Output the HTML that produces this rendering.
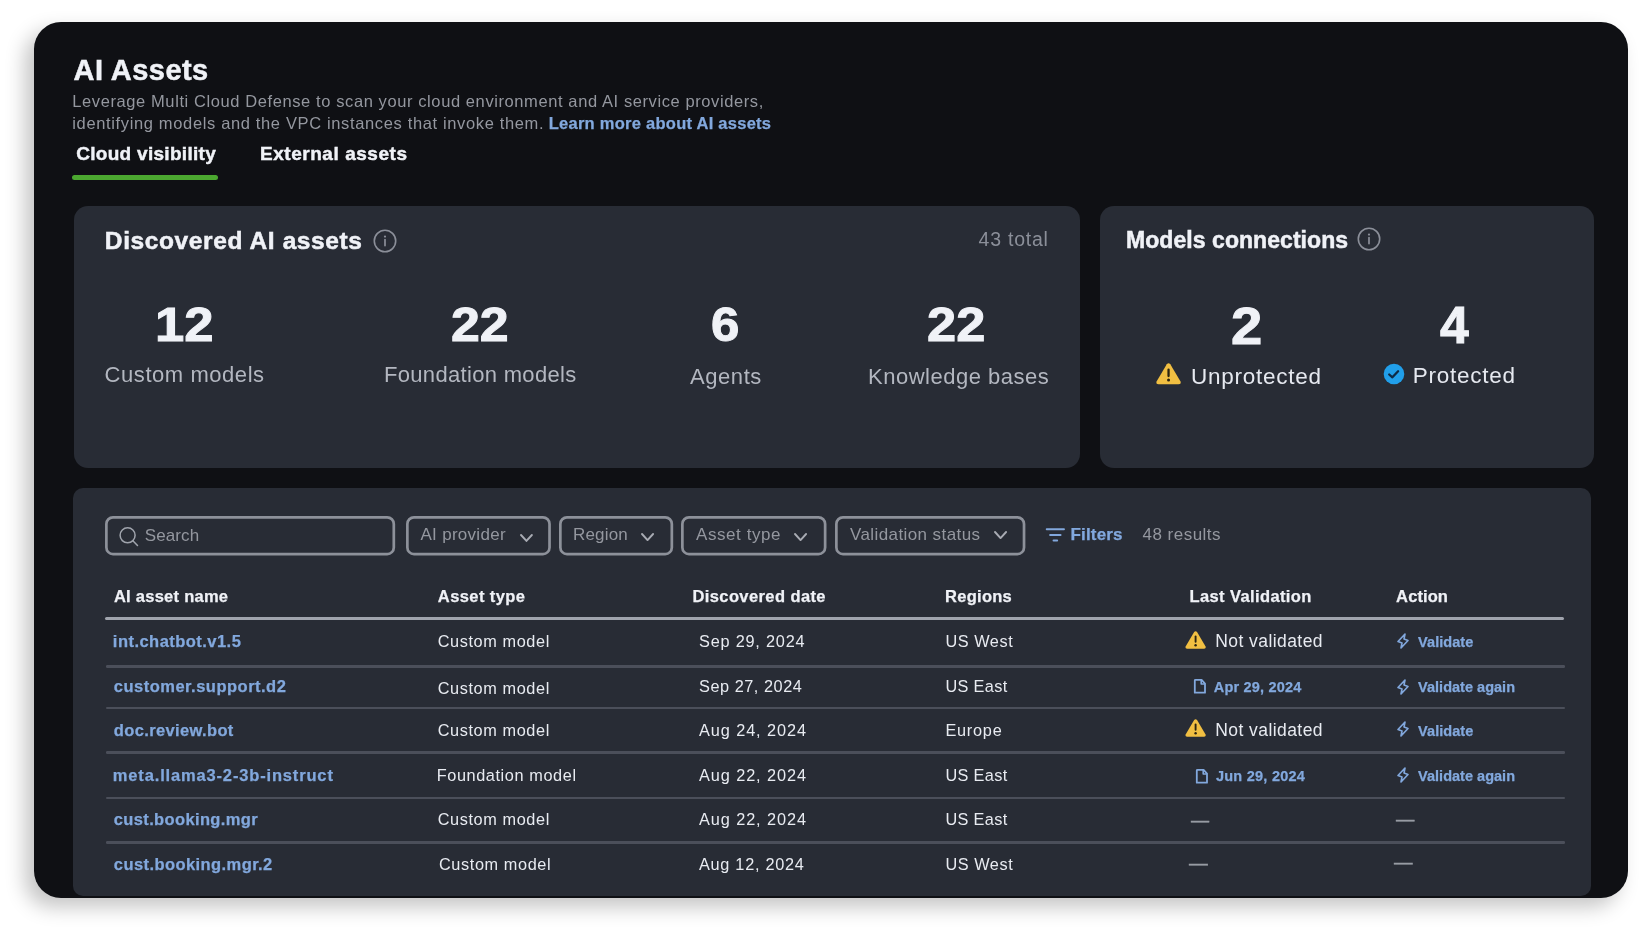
<!DOCTYPE html>
<html lang="en">
<head>
<meta charset="utf-8">
<title>AI Assets</title>
<style>
html,body{margin:0;padding:0;background:#fff;}
body{width:1650px;height:934px;overflow:hidden;position:relative;font-family:"Liberation Sans", sans-serif;}
.card{will-change:transform;position:absolute;left:34px;top:22px;width:1594px;height:876px;background:#0f1014;border-radius:27px;box-shadow:-9px 9px 20px rgba(0,0,0,0.23);}
.panel{position:absolute;background:#282c35;}
.t{position:absolute;margin:0;padding:0;line-height:1;white-space:nowrap;font-weight:400;font-family:"Liberation Sans", sans-serif;}
.abs{position:absolute;}
.ico{position:absolute;overflow:visible;}
a.t{text-decoration:none;}
</style>
</head>
<body>
<main class="card">
<h1 class="t" style="left:39.55px;top:34.00px;font-size:29px;letter-spacing:0.445px;color:#f0f2f7;font-weight:700;-webkit-text-stroke:0.5px #f0f2f7;">AI Assets</h1>
<span class="t" style="left:38.30px;top:71.00px;font-size:16.5px;letter-spacing:0.594px;color:#94979f;">Leverage Multi Cloud Defense to scan your cloud environment and AI service providers,</span>
<span class="t" style="left:38.30px;top:93.00px;font-size:16.5px;letter-spacing:0.641px;color:#94979f;">identifying models and the VPC instances that invoke them.</span>
<span class="t" style="left:514.73px;top:93.00px;font-size:16.5px;letter-spacing:0.261px;color:#82a8dd;font-weight:700;-webkit-text-stroke:0.25px #82a8dd;">Learn more about AI assets</span>
<span class="t" style="left:42.22px;top:122.00px;font-size:19px;letter-spacing:0.293px;color:#f0f2f7;font-weight:700;-webkit-text-stroke:0.45px #f0f2f7;">Cloud visibility</span>
<span class="t" style="left:225.93px;top:122.00px;font-size:19px;letter-spacing:0.550px;color:#f0f2f7;font-weight:700;-webkit-text-stroke:0.45px #f0f2f7;">External assets</span>
<div class="abs tabline" style="left:38.00px;top:153.00px;width:146.00px;height:5.00px;background:#4ba730;border-radius:3px;"></div>
<section class="panel" style="left:40px;top:184px;width:1006px;height:262px;border-radius:14px;">
<span class="t" style="left:30.85px;top:23.00px;font-size:24.5px;letter-spacing:0.607px;color:#f0f2f7;font-weight:700;-webkit-text-stroke:0.5px #f0f2f7;">Discovered AI assets</span>
<span class="t" style="left:904.60px;top:24.00px;font-size:19.5px;letter-spacing:0.767px;color:#8b8f99;">43 total</span>
<span class="t" style="left:81.48px;top:94.00px;font-size:49px;color:#f0f2f7;transform:scaleX(1.0746);transform-origin:0 0;font-weight:700;-webkit-text-stroke:1.0px #f0f2f7;">12</span>
<span class="t" style="left:30.60px;top:158.00px;font-size:22px;letter-spacing:0.556px;color:#b3b7c0;">Custom models</span>
<span class="t" style="left:377.04px;top:94.00px;font-size:49px;color:#f0f2f7;transform:scaleX(1.0583);transform-origin:0 0;font-weight:700;-webkit-text-stroke:1.0px #f0f2f7;">22</span>
<span class="t" style="left:310.00px;top:158.00px;font-size:22px;letter-spacing:0.318px;color:#b3b7c0;">Foundation models</span>
<span class="t" style="left:637.46px;top:94.00px;font-size:49px;color:#f0f2f7;transform:scaleX(1.0400);transform-origin:0 0;font-weight:700;-webkit-text-stroke:1.0px #f0f2f7;">6</span>
<span class="t" style="left:616.00px;top:160.00px;font-size:22px;letter-spacing:0.562px;color:#b3b7c0;">Agents</span>
<span class="t" style="left:853.13px;top:94.00px;font-size:49px;color:#f0f2f7;transform:scaleX(1.0698);transform-origin:0 0;font-weight:700;-webkit-text-stroke:1.0px #f0f2f7;">22</span>
<span class="t" style="left:794.00px;top:160.00px;font-size:22px;letter-spacing:0.509px;color:#b3b7c0;">Knowledge bases</span>
<svg class="ico" style="left:298.30px;top:22.20px" width="26.00" height="26.00" viewBox="0 0 26 26"><circle cx="13" cy="13" r="10.7" fill="none" stroke="#8b8f99" stroke-width="1.6"/><circle cx="13" cy="8.6" r="1.1" fill="#8b8f99"/><path d="M13 11.6V17.6" stroke="#8b8f99" stroke-width="1.7" stroke-linecap="round"/></svg>
</section>
<section class="panel" style="left:1066px;top:184px;width:494px;height:262px;border-radius:14px;">
<span class="t" style="left:26.05px;top:23.00px;font-size:23px;letter-spacing:0.053px;color:#f0f2f7;font-weight:700;-webkit-text-stroke:0.5px #f0f2f7;">Models connections</span>
<span class="t" style="left:130.82px;top:94.00px;font-size:52px;color:#f0f2f7;transform:scaleX(1.0808);transform-origin:0 0;font-weight:700;-webkit-text-stroke:1.0px #f0f2f7;">2</span>
<span class="t" style="left:340.40px;top:93.00px;font-size:52px;color:#f0f2f7;transform:scaleX(0.9931);transform-origin:0 0;font-weight:700;-webkit-text-stroke:1.0px #f0f2f7;">4</span>
<span class="t" style="left:91.00px;top:160.00px;font-size:22.5px;letter-spacing:0.754px;color:#e6e9f0;">Unprotected</span>
<span class="t" style="left:312.80px;top:159.00px;font-size:22.5px;letter-spacing:0.738px;color:#e6e9f0;">Protected</span>
<svg class="ico" style="left:256.20px;top:20.40px" width="26.00" height="26.00" viewBox="0 0 26 26"><circle cx="13" cy="13" r="10.7" fill="none" stroke="#8b8f99" stroke-width="1.6"/><circle cx="13" cy="8.6" r="1.1" fill="#8b8f99"/><path d="M13 11.6V17.6" stroke="#8b8f99" stroke-width="1.7" stroke-linecap="round"/></svg>
<svg class="ico" style="left:56.10px;top:156.60px" width="25.10" height="21.80" viewBox="0 0 24 21"><path d="M10.3 1.3 L0.6 17.6 Q-0.6 20.4 2.4 20.5 L21.6 20.5 Q24.6 20.4 23.4 17.6 L13.7 1.3 Q12 -0.9 10.3 1.3 Z" fill="#f1bf42"/><path d="M12 6.4V12.6" stroke="#2b2411" stroke-width="2.2" stroke-linecap="round"/><circle cx="12" cy="16.4" r="1.45" fill="#2b2411"/></svg>
<svg class="ico" style="left:282.30px;top:155.90px" width="24.00" height="24.00" viewBox="0 0 24 24"><circle cx="12" cy="12" r="10.3" fill="#219fea"/><path d="M7.2 12.5 L10.4 15.3 L16.1 9.3" fill="none" stroke="#0e2a45" stroke-width="2.3" stroke-linecap="round" stroke-linejoin="round"/></svg>
</section>
<section class="panel" style="left:39px;top:466px;width:1518px;height:407.5px;border-radius:10px;">
<svg class="ico field" style="left:31.50px;top:27.50px" width="290.20" height="39.40" viewBox="0 0 290.20 39.40"><rect x="1.35" y="1.35" width="287.50" height="36.70" rx="6.6" fill="none" stroke="#8d919a" stroke-width="2.7"/></svg>
<svg class="ico field" style="left:332.60px;top:27.50px" width="144.90" height="39.40" viewBox="0 0 144.90 39.40"><rect x="1.35" y="1.35" width="142.20" height="36.70" rx="6.6" fill="none" stroke="#8d919a" stroke-width="2.7"/></svg>
<svg class="ico field" style="left:485.80px;top:27.50px" width="114.20" height="39.40" viewBox="0 0 114.20 39.40"><rect x="1.35" y="1.35" width="111.50" height="36.70" rx="6.6" fill="none" stroke="#8d919a" stroke-width="2.7"/></svg>
<svg class="ico field" style="left:608.10px;top:27.50px" width="145.50" height="39.40" viewBox="0 0 145.50 39.40"><rect x="1.35" y="1.35" width="142.80" height="36.70" rx="6.6" fill="none" stroke="#8d919a" stroke-width="2.7"/></svg>
<svg class="ico field" style="left:761.80px;top:27.50px" width="190.40" height="39.40" viewBox="0 0 190.40 39.40"><rect x="1.35" y="1.35" width="187.70" height="36.70" rx="6.6" fill="none" stroke="#8d919a" stroke-width="2.7"/></svg>
<svg class="ico" style="left:44.00px;top:36.00px" width="24.00" height="24.00" viewBox="0 0 24 24"><circle cx="10.6" cy="11.3" r="7.5" fill="none" stroke="#a0a4ad" stroke-width="1.5"/><path d="M16.1 16.9 L20.5 21.5" stroke="#a0a4ad" stroke-width="1.5" stroke-linecap="round"/></svg>
<svg class="ico" style="left:447.30px;top:45.52px" width="12.90" height="8.97" viewBox="0 0 12.90 8.97"><path d="M1 1 L6.45 6.97 L11.90 1" fill="none" stroke="#a8abb3" stroke-width="1.9" stroke-linecap="round" stroke-linejoin="round"/></svg>
<svg class="ico" style="left:567.90px;top:45.46px" width="13.10" height="9.07" viewBox="0 0 13.10 9.07"><path d="M1 1 L6.55 7.07 L12.10 1" fill="none" stroke="#a8abb3" stroke-width="1.9" stroke-linecap="round" stroke-linejoin="round"/></svg>
<svg class="ico" style="left:721.20px;top:45.46px" width="13.10" height="9.07" viewBox="0 0 13.10 9.07"><path d="M1 1 L6.55 7.07 L12.10 1" fill="none" stroke="#a8abb3" stroke-width="1.9" stroke-linecap="round" stroke-linejoin="round"/></svg>
<svg class="ico" style="left:920.70px;top:43.46px" width="13.10" height="9.07" viewBox="0 0 13.10 9.07"><path d="M1 1 L6.55 7.07 L12.10 1" fill="none" stroke="#a8abb3" stroke-width="1.9" stroke-linecap="round" stroke-linejoin="round"/></svg>
<svg class="ico" style="left:972.00px;top:36.00px" width="21.00" height="21.00" viewBox="0 0 21 21"><path d="M1.7 5.3 H19 M5.1 11 H15.6 M8.5 16.5 H12.2" stroke="#82a8dd" stroke-width="1.9" stroke-linecap="round" fill="none"/></svg>
<div class="abs" style="left:31.50px;top:129.00px;width:1459.80px;height:3.30px;background:#a0a4ad;border-radius:1.6px;"></div>
<div class="abs" style="left:33.00px;top:177.25px;width:1459.30px;height:2.50px;background:#4b4f5a;border-radius:1.2px;"></div>
<div class="abs" style="left:33.00px;top:218.95px;width:1459.30px;height:2.50px;background:#4b4f5a;border-radius:1.2px;"></div>
<div class="abs" style="left:33.00px;top:263.45px;width:1459.30px;height:2.50px;background:#4b4f5a;border-radius:1.2px;"></div>
<div class="abs" style="left:33.00px;top:308.55px;width:1459.30px;height:2.50px;background:#4b4f5a;border-radius:1.2px;"></div>
<div class="abs" style="left:33.00px;top:353.05px;width:1459.30px;height:2.50px;background:#4b4f5a;border-radius:1.2px;"></div>
<svg class="ico" style="left:1112.30px;top:143.40px" width="21.20" height="18.10" viewBox="0 0 24 21"><path d="M10.3 1.3 L0.6 17.6 Q-0.6 20.4 2.4 20.5 L21.6 20.5 Q24.6 20.4 23.4 17.6 L13.7 1.3 Q12 -0.9 10.3 1.3 Z" fill="#f1bf42"/><path d="M12 6.4V12.6" stroke="#2b2411" stroke-width="2.2" stroke-linecap="round"/><circle cx="12" cy="16.4" r="1.45" fill="#2b2411"/></svg>
<svg class="ico" style="left:1112.30px;top:230.50px" width="21.20" height="18.10" viewBox="0 0 24 21"><path d="M10.3 1.3 L0.6 17.6 Q-0.6 20.4 2.4 20.5 L21.6 20.5 Q24.6 20.4 23.4 17.6 L13.7 1.3 Q12 -0.9 10.3 1.3 Z" fill="#f1bf42"/><path d="M12 6.4V12.6" stroke="#2b2411" stroke-width="2.2" stroke-linecap="round"/><circle cx="12" cy="16.4" r="1.45" fill="#2b2411"/></svg>
<svg class="ico" style="left:1120.60px;top:191.30px" width="11.80" height="14.50" viewBox="0 0 11.8 14.5"><path d="M1.6 0.8 H7.6 L11 4.6 V13.7 H0.8 V1.6 Q0.8 0.8 1.6 0.8 Z" fill="none" stroke="#82a8dd" stroke-width="1.8" stroke-linejoin="round"/><path d="M7.2 1 V5 H10.8" fill="none" stroke="#82a8dd" stroke-width="1.6" stroke-linejoin="round"/></svg>
<svg class="ico" style="left:1122.50px;top:280.90px" width="11.80" height="14.50" viewBox="0 0 11.8 14.5"><path d="M1.6 0.8 H7.6 L11 4.6 V13.7 H0.8 V1.6 Q0.8 0.8 1.6 0.8 Z" fill="none" stroke="#82a8dd" stroke-width="1.8" stroke-linejoin="round"/><path d="M7.2 1 V5 H10.8" fill="none" stroke="#82a8dd" stroke-width="1.6" stroke-linejoin="round"/></svg>
<svg class="ico" style="left:1321.70px;top:145.30px" width="16.00" height="16.00" viewBox="0 0 256 256"><path d="M96 240 L112 160 L48 136 L160 16 L144 96 L208 120 Z" fill="none" stroke="#82a8dd" stroke-width="26" stroke-linejoin="round" stroke-linecap="round"/></svg>
<svg class="ico" style="left:1321.70px;top:191.30px" width="16.00" height="16.00" viewBox="0 0 256 256"><path d="M96 240 L112 160 L48 136 L160 16 L144 96 L208 120 Z" fill="none" stroke="#82a8dd" stroke-width="26" stroke-linejoin="round" stroke-linecap="round"/></svg>
<svg class="ico" style="left:1321.70px;top:233.20px" width="16.00" height="16.00" viewBox="0 0 256 256"><path d="M96 240 L112 160 L48 136 L160 16 L144 96 L208 120 Z" fill="none" stroke="#82a8dd" stroke-width="26" stroke-linejoin="round" stroke-linecap="round"/></svg>
<svg class="ico" style="left:1321.70px;top:279.30px" width="16.00" height="16.00" viewBox="0 0 256 256"><path d="M96 240 L112 160 L48 136 L160 16 L144 96 L208 120 Z" fill="none" stroke="#82a8dd" stroke-width="26" stroke-linejoin="round" stroke-linecap="round"/></svg>
<span class="t" style="left:71.80px;top:39.00px;font-size:17px;letter-spacing:0.098px;color:#94979f;">Search</span>
<span class="t" style="left:347.50px;top:38.00px;font-size:17px;letter-spacing:0.286px;color:#94979f;">AI provider</span>
<span class="t" style="left:500.00px;top:38.00px;font-size:17px;letter-spacing:0.177px;color:#94979f;">Region</span>
<span class="t" style="left:623.00px;top:38.00px;font-size:17px;letter-spacing:0.565px;color:#94979f;">Asset type</span>
<span class="t" style="left:777.00px;top:38.00px;font-size:17px;letter-spacing:0.407px;color:#94979f;">Validation status</span>
<span class="t" style="left:997.53px;top:38.00px;font-size:17px;letter-spacing:0.165px;color:#82a8dd;font-weight:700;-webkit-text-stroke:0.25px #82a8dd;">Filters</span>
<span class="t" style="left:1069.60px;top:38.00px;font-size:17px;letter-spacing:0.466px;color:#94979f;">48 results</span>
<span class="t" style="left:40.92px;top:100.00px;font-size:16.5px;letter-spacing:0.263px;color:#f0f2f7;font-weight:700;-webkit-text-stroke:0.25px #f0f2f7;">AI asset name</span>
<span class="t" style="left:364.82px;top:100.00px;font-size:16.5px;letter-spacing:0.420px;color:#f0f2f7;font-weight:700;-webkit-text-stroke:0.25px #f0f2f7;">Asset type</span>
<span class="t" style="left:619.42px;top:100.00px;font-size:16.5px;letter-spacing:0.404px;color:#f0f2f7;font-weight:700;-webkit-text-stroke:0.25px #f0f2f7;">Discovered date</span>
<span class="t" style="left:872.12px;top:100.00px;font-size:16.5px;letter-spacing:0.256px;color:#f0f2f7;font-weight:700;-webkit-text-stroke:0.25px #f0f2f7;">Regions</span>
<span class="t" style="left:1116.53px;top:100.00px;font-size:16.5px;letter-spacing:0.385px;color:#f0f2f7;font-weight:700;-webkit-text-stroke:0.25px #f0f2f7;">Last Validation</span>
<span class="t" style="left:1323.12px;top:100.00px;font-size:16.5px;letter-spacing:0.100px;color:#f0f2f7;font-weight:700;-webkit-text-stroke:0.25px #f0f2f7;">Action</span>
<span class="t" style="left:39.83px;top:145.00px;font-size:16.5px;letter-spacing:0.467px;color:#82a8dd;font-weight:700;-webkit-text-stroke:0.25px #82a8dd;">int.chatbot.v1.5</span>
<span class="t" style="left:364.70px;top:145.00px;font-size:16.3px;letter-spacing:0.605px;color:#e8ebf1;">Custom model</span>
<span class="t" style="left:626.00px;top:145.00px;font-size:16.3px;letter-spacing:0.790px;color:#e8ebf1;">Sep 29, 2024</span>
<span class="t" style="left:872.40px;top:145.00px;font-size:16.3px;letter-spacing:0.565px;color:#e8ebf1;">US West</span>
<span class="t" style="left:40.83px;top:190.00px;font-size:16.5px;letter-spacing:0.491px;color:#82a8dd;font-weight:700;-webkit-text-stroke:0.25px #82a8dd;">customer.support.d2</span>
<span class="t" style="left:364.70px;top:192.00px;font-size:16.3px;letter-spacing:0.605px;color:#e8ebf1;">Custom model</span>
<span class="t" style="left:626.00px;top:190.00px;font-size:16.3px;letter-spacing:0.544px;color:#e8ebf1;">Sep 27, 2024</span>
<span class="t" style="left:872.40px;top:190.00px;font-size:16.3px;letter-spacing:0.351px;color:#e8ebf1;">US East</span>
<span class="t" style="left:40.83px;top:234.00px;font-size:16.5px;letter-spacing:0.356px;color:#82a8dd;font-weight:700;-webkit-text-stroke:0.25px #82a8dd;">doc.review.bot</span>
<span class="t" style="left:364.70px;top:234.00px;font-size:16.3px;letter-spacing:0.605px;color:#e8ebf1;">Custom model</span>
<span class="t" style="left:626.00px;top:234.00px;font-size:16.3px;letter-spacing:0.917px;color:#e8ebf1;">Aug 24, 2024</span>
<span class="t" style="left:872.40px;top:234.00px;font-size:16.3px;letter-spacing:0.771px;color:#e8ebf1;">Europe</span>
<span class="t" style="left:39.83px;top:279.00px;font-size:16.5px;letter-spacing:0.840px;color:#82a8dd;font-weight:700;-webkit-text-stroke:0.25px #82a8dd;">meta.llama3-2-3b-instruct</span>
<span class="t" style="left:363.70px;top:279.00px;font-size:16.3px;letter-spacing:0.599px;color:#e8ebf1;">Foundation model</span>
<span class="t" style="left:626.00px;top:279.00px;font-size:16.3px;letter-spacing:0.917px;color:#e8ebf1;">Aug 22, 2024</span>
<span class="t" style="left:872.40px;top:279.00px;font-size:16.3px;letter-spacing:0.351px;color:#e8ebf1;">US East</span>
<span class="t" style="left:40.83px;top:323.00px;font-size:16.5px;letter-spacing:0.357px;color:#82a8dd;font-weight:700;-webkit-text-stroke:0.25px #82a8dd;">cust.booking.mgr</span>
<span class="t" style="left:364.70px;top:323.00px;font-size:16.3px;letter-spacing:0.605px;color:#e8ebf1;">Custom model</span>
<span class="t" style="left:626.00px;top:323.00px;font-size:16.3px;letter-spacing:0.917px;color:#e8ebf1;">Aug 22, 2024</span>
<span class="t" style="left:872.40px;top:323.00px;font-size:16.3px;letter-spacing:0.351px;color:#e8ebf1;">US East</span>
<span class="t" style="left:40.83px;top:368.00px;font-size:16.5px;letter-spacing:0.421px;color:#82a8dd;font-weight:700;-webkit-text-stroke:0.25px #82a8dd;">cust.booking.mgr.2</span>
<span class="t" style="left:366.00px;top:368.00px;font-size:16.3px;letter-spacing:0.605px;color:#e8ebf1;">Custom model</span>
<span class="t" style="left:626.00px;top:368.00px;font-size:16.3px;letter-spacing:0.717px;color:#e8ebf1;">Aug 12, 2024</span>
<span class="t" style="left:872.40px;top:368.00px;font-size:16.3px;letter-spacing:0.565px;color:#e8ebf1;">US West</span>
<span class="t" style="left:1142.30px;top:145.00px;font-size:17.5px;letter-spacing:0.424px;color:#e8ebf1;">Not validated</span>
<span class="t" style="left:1142.30px;top:234.00px;font-size:17.5px;letter-spacing:0.424px;color:#e8ebf1;">Not validated</span>
<span class="t" style="left:1140.72px;top:192.00px;font-size:14.5px;letter-spacing:0.197px;color:#82a8dd;font-weight:700;-webkit-text-stroke:0.25px #82a8dd;">Apr 29, 2024</span>
<span class="t" style="left:1142.92px;top:281.00px;font-size:14.5px;letter-spacing:0.251px;color:#82a8dd;font-weight:700;-webkit-text-stroke:0.25px #82a8dd;">Jun 29, 2024</span>
<span class="t" style="left:1345.12px;top:147.00px;font-size:14.5px;letter-spacing:0.058px;color:#82a8dd;font-weight:700;-webkit-text-stroke:0.25px #82a8dd;">Validate</span>
<span class="t" style="left:1345.12px;top:192.00px;font-size:14.5px;letter-spacing:0.015px;color:#82a8dd;font-weight:700;-webkit-text-stroke:0.25px #82a8dd;">Validate again</span>
<span class="t" style="left:1345.12px;top:236.00px;font-size:14.5px;letter-spacing:0.058px;color:#82a8dd;font-weight:700;-webkit-text-stroke:0.25px #82a8dd;">Validate</span>
<span class="t" style="left:1345.12px;top:281.00px;font-size:14.5px;letter-spacing:0.015px;color:#82a8dd;font-weight:700;-webkit-text-stroke:0.25px #82a8dd;">Validate again</span>
<span class="t" style="left:1118.20px;top:322.00px;font-size:19px;color:#979ba3;transform:scaleX(0.9526);transform-origin:0 0;-webkit-text-stroke:0.4px #979ba3;">—</span>
<span class="t" style="left:1116.20px;top:365.00px;font-size:19px;color:#979ba3;transform:scaleX(0.9895);transform-origin:0 0;-webkit-text-stroke:0.4px #979ba3;">—</span>
<span class="t" style="left:1322.60px;top:321.00px;font-size:19px;color:#979ba3;transform:scaleX(0.9684);transform-origin:0 0;-webkit-text-stroke:0.4px #979ba3;">—</span>
<span class="t" style="left:1321.20px;top:364.00px;font-size:19px;color:#979ba3;transform:scaleX(0.9789);transform-origin:0 0;-webkit-text-stroke:0.4px #979ba3;">—</span>
</section>
</main>
</body>
</html>
